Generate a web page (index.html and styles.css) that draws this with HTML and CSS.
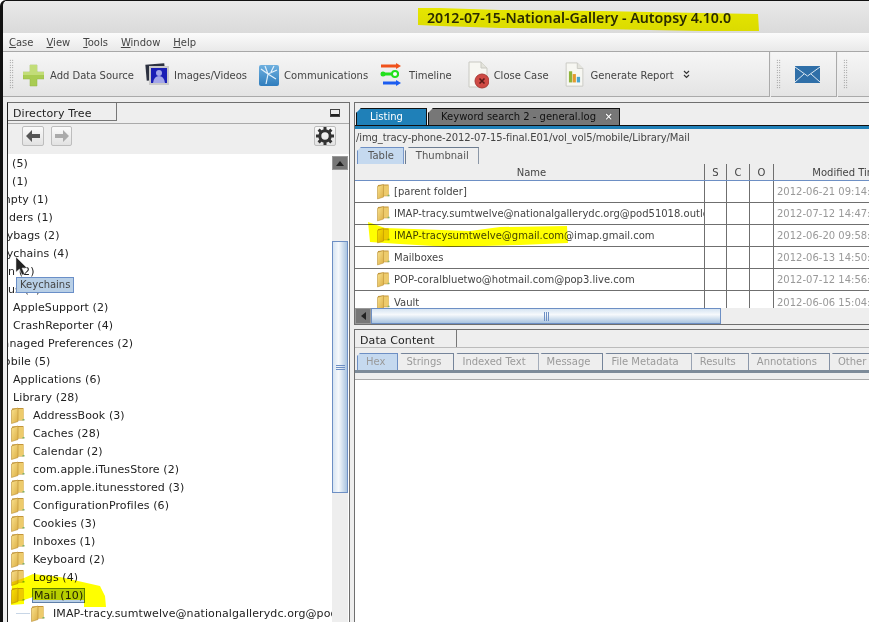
FILE: index.html
```html
<!DOCTYPE html>
<html lang="en">
<head>
<meta charset="UTF-8" />
<title>2012-07-15-National-Gallery - Autopsy 4.10.0</title>
<link rel="stylesheet" href="styles.css">
</head>
<body>
<svg class="defs" width="0" height="0" aria-hidden="true">
  <defs>
    <linearGradient id="folderFill" x1="0" y1="0" x2="1" y2="1">
      <stop offset="0" stop-color="#f9e28e" />
      <stop offset="1" stop-color="#dcae45" />
    </linearGradient>
    <linearGradient id="commFill" x1="0" y1="0" x2="0" y2="1">
      <stop offset="0" stop-color="#6fb0df" />
      <stop offset="1" stop-color="#2f7dbd" />
    </linearGradient>
    <symbol id="folder" viewBox="0 0 14 17">
      <path d="M1 1.5 L6 1 L12.5 1 L12.5 13.5 L6 13.5 L1 15.5 Z" fill="#c3953a" />
      <path d="M6 2 L12.5 2 L12.5 13 L6 13 Z" fill="#edcb6c" />
      <path d="M0.5 3 L7 1 L7 14.5 L0.5 16.5 Z" fill="url(#folderFill)" stroke="#b98f36" stroke-width=".6" />
      <path d="M11.5 12 h2 v1.5 h-2z" fill="#7fb069" />
    </symbol>
    <symbol id="doc" viewBox="0 0 22 28">
      <path d="M2 1 H14 L20 7 V26 H2 Z" fill="#f7f7f2" stroke="#c9c9c2" />
      <path d="M14 1 V7 H20" fill="#e4e4dc" stroke="#c9c9c2" />
    </symbol>
  </defs>
</svg>

<header class="titlebar">
  <span class="title">2012-07-15-National-Gallery - Autopsy 4.10.0</span>
</header>

<nav class="menubar">
  <span><u>C</u>ase</span>
  <span><u>V</u>iew</span>
  <span><u>T</u>ools</span>
  <span><u>W</u>indow</span>
  <span><u>H</u>elp</span>
</nav>

<div class="toolbars">
  <div class="toolbar toolbar-main">
    <i class="grip"></i>
    <button class="tool tool-add">
      <svg width="21" height="23" viewBox="0 0 21 23"><path d="M7 1 H14 V8 H21 V15 H14 V22 H7 V15 H0 V8 H7 Z" fill="#a9cc52" stroke="#93b544" stroke-width=".5" /><path d="M7 1 H14 V8 H7Z M0 8 H21 V11 H0Z" fill="#c2dd78" /></svg>
      Add Data Source
    </button>
    <button class="tool tool-images">
      <svg width="25" height="24" viewBox="0 0 25 24"><rect x="1" y="1" width="19" height="16" fill="#2c3140" transform="rotate(-5 10 9)" /><rect x="4" y="3" width="20" height="19" fill="#c9c9c9" /><rect x="6" y="5" width="16" height="15" fill="#1b1fb5" /><circle cx="14" cy="10" r="3" fill="#a3a6e8" /><path d="M8 20 Q9 13 14 13 Q19 13 20 20Z" fill="#a3a6e8" /></svg>
      Images/Videos
    </button>
    <button class="tool tool-comm">
      <svg width="20" height="21" viewBox="0 0 20 21"><rect x="0" y="0" width="20" height="21" rx="2" fill="url(#commFill)" /><path d="M2 4 L9 9 L7 19 M9 9 L18 5 M9 9 L17 14 M6 1 L9 9 M12 7 L15 1" stroke="#e3f1fb" stroke-width="1.2" fill="none" /></svg>
      Communications
    </button>
    <button class="tool tool-time">
      <svg width="22" height="24" viewBox="0 0 22 24"><path d="M1 3 H17" stroke="#f0521c" stroke-width="3" /><path d="M16 0 L21 3 L16 6Z" fill="#f0521c" /><path d="M1 11 H19" stroke="#22e01c" stroke-width="3" /><circle cx="3" cy="11" r="2.5" fill="#22e01c" /><circle cx="15" cy="11" r="3" fill="#fff" stroke="#22e01c" stroke-width="2" /><path d="M3 20 H17" stroke="#1b5cf0" stroke-width="3" /><path d="M16 17 L21 20 L16 23Z" fill="#1b5cf0" /></svg>
      Timeline
    </button>
    <button class="tool tool-close">
      <svg width="22" height="28" viewBox="0 0 22 28"><use href="#doc" /><circle cx="15" cy="20" r="7" fill="#cf4a44" stroke="#a93a35" /><path d="M12.5 17.5 L17.5 22.5 M17.5 17.5 L12.5 22.5" stroke="#5b1a18" stroke-width="1.6" /></svg>
      Close Case
    </button>
    <button class="tool tool-report">
      <svg width="21" height="26" viewBox="0 0 22 28"><use href="#doc" /><rect x="5" y="10" width="3.5" height="12" fill="#8fb43a" /><rect x="9" y="13" width="3.5" height="9" fill="#e39a2e" /><rect x="13.5" y="16" width="3.5" height="6" fill="#4aa6cf" /></svg>
      Generate Report
    </button>
    <svg class="more" width="7" height="9" viewBox="0 0 7 9"><path d="M1 1 L3.5 3.5 L6 1 M1 5 L3.5 7.5 L6 5" stroke="#333" stroke-width="1.2" fill="none" /></svg>
  </div>
  <div class="toolbar toolbar-mail">
    <i class="grip"></i>
    <svg class="envelope" width="25" height="17" viewBox="0 0 25 17"><rect width="25" height="17" fill="#2f6fa8" /><path d="M0 1 L12.5 10 L25 1 M0 16 L9 8 M25 16 L16 8" stroke="#dbe7f1" stroke-width="1" fill="none" /></svg>
  </div>
  <div class="toolbar toolbar-last">
    <i class="grip"></i>
  </div>
</div>

<main class="workspace">
  <section class="pane tree-pane">
    <div class="pane-head">
      <span class="pane-tab">Directory Tree</span>
      <span class="minimize"></span>
    </div>
    <div class="tree-nav">
      <span class="nav-btn">
        <svg width="14" height="12" viewBox="0 0 14 12"><path d="M6 0 L0 6 L6 12 L6 8 H14 V4 H6 Z" fill="#555" /></svg>
      </span>
      <span class="nav-btn nav-off">
        <svg width="14" height="12" viewBox="0 0 14 12"><path d="M8 0 L14 6 L8 12 L8 8 H0 V4 H8 Z" fill="#aaa" /></svg>
      </span>
      <span class="nav-btn nav-gear">
        <svg width="18" height="18" viewBox="0 0 18 18"><circle cx="9" cy="9" r="5.2" fill="none" stroke="#333" stroke-width="3" /><path d="M9 0 V4 M9 14 V18 M0 9 H4 M14 9 H18 M2.6 2.6 L5.4 5.4 M12.6 12.6 L15.4 15.4 M15.4 2.6 L12.6 5.4 M5.4 12.6 L2.6 15.4" stroke="#333" stroke-width="3" /></svg>
      </span>
    </div>
    <div class="tree-body">
      <ul class="tree">
        <li class="cut">(5)</li>
        <li class="cut">(1)</li>
        <li class="d1">Empty (1)</li>
        <li class="d1">Folders (1)</li>
        <li class="d1">Keybags (2)</li>
        <li class="d1">Keychains (4)</li>
        <li class="d1 stub">n (2)</li>
        <li class="d1 stub">us (1)</li>
        <li class="d2">AppleSupport (2)</li>
        <li class="d2">CrashReporter (4)</li>
        <li class="d1">Managed Preferences (2)</li>
        <li class="d1">mobile (5)</li>
        <li class="d2">Applications (6)</li>
        <li class="d2">Library (28)</li>
        <li class="d3"><svg><use href="#folder" /></svg>AddressBook (3)</li>
        <li class="d3"><svg><use href="#folder" /></svg>Caches (28)</li>
        <li class="d3"><svg><use href="#folder" /></svg>Calendar (2)</li>
        <li class="d3"><svg><use href="#folder" /></svg>com.apple.iTunesStore (2)</li>
        <li class="d3"><svg><use href="#folder" /></svg>com.apple.itunesstored (3)</li>
        <li class="d3"><svg><use href="#folder" /></svg>ConfigurationProfiles (6)</li>
        <li class="d3"><svg><use href="#folder" /></svg>Cookies (3)</li>
        <li class="d3"><svg><use href="#folder" /></svg>Inboxes (1)</li>
        <li class="d3"><svg><use href="#folder" /></svg>Keyboard (2)</li>
        <li class="d3"><svg><use href="#folder" /></svg>Logs (4)</li>
        <li class="d3"><svg><use href="#folder" /></svg><span class="selected">Mail (10)</span></li>
        <li class="d4"><svg><use href="#folder" /></svg>IMAP-tracy.sumtwelve@nationalgallerydc.org@pod51018.outlook.com</li>
      </ul>
      <div class="vscroll">
        <span class="sb-btn"><i class="arrow-up"></i></span>
        <span class="sb-track sb-top"></span>
        <span class="sb-thumb-v"><i class="grip-v"></i></span>
        <span class="sb-track sb-fill"></span>
      </div>
    </div>
  </section>

  <div class="right-col">
    <section class="pane listing-pane">
      <div class="main-tabs">
        <span class="main-tab active">Listing</span>
        <span class="main-tab">Keyword search 2 - general.log <b class="close-x">×</b></span>
      </div>
      <div class="blue-rule"></div>
      <div class="path">/img_tracy-phone-2012-07-15-final.E01/vol_vol5/mobile/Library/Mail</div>
      <div class="sub-tabs">
        <span class="sub-tab on">Table</span>
        <span class="sub-tab">Thumbnail</span>
      </div>
      <div class="grid">
        <div class="row head"><span>Name</span><span>S</span><span>C</span><span>O</span><span>Modified Time</span></div>
        <div class="row"><span><svg><use href="#folder" /></svg>[parent folder]</span><span></span><span></span><span></span><span class="date">2012-06-21 09:14:06</span></div>
        <div class="row"><span><svg><use href="#folder" /></svg>IMAP-tracy.sumtwelve@nationalgallerydc.org@pod51018.outlook.com</span><span></span><span></span><span></span><span class="date">2012-07-12 14:47:06</span></div>
        <div class="row"><span><svg><use href="#folder" /></svg>IMAP-tracysumtwelve@gmail.com@imap.gmail.com</span><span></span><span></span><span></span><span class="date">2012-06-20 09:58:54</span></div>
        <div class="row"><span><svg><use href="#folder" /></svg>Mailboxes</span><span></span><span></span><span></span><span class="date">2012-06-13 14:50:13</span></div>
        <div class="row"><span><svg><use href="#folder" /></svg>POP-coralbluetwo@hotmail.com@pop3.live.com</span><span></span><span></span><span></span><span class="date">2012-07-12 14:56:44</span></div>
        <div class="row row-last"><span><svg><use href="#folder" /></svg>Vault</span><span></span><span></span><span></span><span class="date">2012-06-06 15:04:44</span></div>
      </div>
      <div class="hscroll">
        <span class="sb-btn"><i class="arrow-left"></i></span>
        <span class="sb-thumb-h"><i class="grip-h"></i></span>
        <span class="sb-track"></span>
      </div>
    </section>

    <section class="pane content-pane">
      <div class="pane-head content-head">
        <span class="pane-tab">Data Content</span>
      </div>
      <div class="data-tabs">
        <span class="data-tab on">Hex</span>
        <span class="data-tab">Strings</span>
        <span class="data-tab">Indexed Text</span>
        <span class="data-tab">Message</span>
        <span class="data-tab">File Metadata</span>
        <span class="data-tab">Results</span>
        <span class="data-tab">Annotations</span>
        <span class="data-tab">Other Occurrences</span>
      </div>
      <div class="data-rule"></div>
      <div class="data-band"></div>
      <div class="data-view"></div>
    </section>
  </div>
</main>

<div class="tooltip">Keychains</div>
<svg class="cursor" width="13" height="20" viewBox="0 0 13 20"><path d="M1 0 L1 15 L4.5 12 L7 18 L9.5 17 L7 11 L12 11 Z" fill="#222" stroke="#ddd" stroke-width=".5" /></svg>

<!-- marker strokes drawn over the screenshot -->
<svg class="marker" width="869" height="622" viewBox="0 0 869 622" aria-hidden="true">
  <path d="M418 8 L440 8 L500 10 L600 11 L700 13 L758 14 L759 31 L700 31 L600 29 L500 28 L440 26 L418 25 Z" />
  <path d="M368 222 L385 228 L470 231 L500 227 L567 226 L568 243 L520 245 L450 247 L400 244 L370 242 Z" />
  <path d="M12 582 L24 578 L33 574 L60 577 L78 581 L100 586 L105 596 L106 607 L84 607 L84 600 L33 600 L33 597 L24 600 L24 604 L11 605 Z" />
</svg>
</body>
</html>
```

FILE: styles.css
```css
:root {
  --line: #6f6f6f;
  --panel: #eeeeee;
  --blue-line: #6d8fc4;
  --text: #2a2a2a;
  --font: "DejaVu Sans", sans-serif;
}
* {
  box-sizing: border-box;
}
html,
body {
  margin: 0;
  height: 622px;
  overflow: hidden;
}
html {
  background: #fff;
}
body {
  position: relative;
  width: 869px;
  background: var(--panel);
  border-left: 3px solid #111;
  border-top: 1px solid #111;
  border-top-left-radius: 6px;
  font-family: var(--font);
  font-size: 10px;
  color: var(--text);
}
.defs {
  position: absolute;
}
.titlebar {
  height: 32px;
  background: linear-gradient(#e9e9e9, #dadada);
  border-top-left-radius: 5px;
  display: flex;
  justify-content: flex-end;
  align-items: center;
  padding-right: 138px;
}
.title {
  font-family: "Noto Sans", sans-serif;
  font-size: 14.2px;
  font-weight: 600;
  color: #2b2b10;
}
.menubar {
  height: 19px;
  background: linear-gradient(#fbfbfb, #e9e9e9);
  border-bottom: 1px solid #a8a8a8;
  display: flex;
  align-items: center;
  gap: 13px;
  padding-left: 6px;
  color: #444;
}
.toolbars {
  height: 45px;
  display: flex;
  gap: 1px;
}
.toolbar {
  background: linear-gradient(#f6f6f6, #e4e4e4);
  border-right: 1px solid #aaa;
  border-bottom: 1px solid #aaa;
  display: flex;
  align-items: center;
}
.toolbar-main {
  width: 767px;
  padding-left: 6px;
}
.toolbar-mail {
  width: 66px;
  padding-left: 5px;
}
.toolbar-last {
  flex: 1;
  padding-left: 5px;
  border-right: 0;
}
.grip {
  width: 5px;
  height: 30px;
  background: radial-gradient(circle, #777 0.6px, transparent 0.8px) 0 0 / 2.5px 2.5px;
}
.tool {
  display: flex;
  align-items: center;
  gap: 6px;
  border: 0;
  padding: 2px 0 0;
  margin-left: 12px;
  background: none;
  font: inherit;
  color: #444;
}
.toolbar-main .grip + .tool {
  margin-left: 9px;
}
.tool-images {
  gap: 4px;
  margin-left: 11px;
}
.tool-comm {
  gap: 5px;
}
.tool-time {
  gap: 7px;
}
.tool-close {
  gap: 5px;
  margin-left: 15px;
}
.tool-report {
  margin-left: 15px;
}
.more {
  margin-left: 9px;
}
.envelope {
  margin-left: 14px;
}
.workspace {
  display: flex;
  gap: 4px;
  padding: 5px 0 0 4px;
  height: 525px;
}
.pane {
  border: 1px solid var(--line);
  background: var(--panel);
}
.tree-pane {
  width: 343px;
  display: flex;
  flex-direction: column;
  border-left-color: #222;
  border-bottom: 0;
  overflow: hidden;
}
.pane-head {
  height: 21px;
  flex: none;
  display: flex;
  justify-content: space-between;
  border-bottom: 1px solid #aaa;
  font-size: 11px;
  letter-spacing: 0.1px;
}
.pane-tab {
  width: 109px;
  height: 18px;
  display: flex;
  align-items: center;
  padding: 3px 0 0 5px;
  border-right: 1px solid #777;
  border-bottom: 1px solid #777;
  color: #222;
}
.minimize {
  width: 10px;
  height: 8px;
  margin: 6px 9px 0 0;
  border: 1px solid #444;
  background: linear-gradient(transparent 4px, #222 4px);
}
.tree-nav {
  height: 30px;
  flex: none;
  display: flex;
  gap: 7px;
  padding: 2px 0 0 14px;
}
.nav-btn {
  width: 22px;
  height: 20px;
  display: flex;
  align-items: center;
  justify-content: center;
  border: 1px solid #bdbdbd;
  border-radius: 2px;
  background: linear-gradient(#fafafa, #e2e2e2);
}
.nav-off {
  width: 21px;
}
.nav-gear {
  margin-left: auto;
  margin-right: 13px;
}
.tree-body {
  flex: 1;
  min-height: 0;
  display: flex;
  background: #fff;
}
.tree {
  flex: 1;
  min-width: 0;
  margin: 0;
  padding: 0;
  list-style: none;
  overflow: hidden;
  color: #222;
  font-size: 11px;
  letter-spacing: 0.1px;
}
.tree li {
  height: 18px;
  display: flex;
  align-items: center;
  white-space: nowrap;
}
.tree svg {
  width: 14px;
  height: 17px;
  flex: none;
  margin-right: 8px;
}
.cut {
  padding-left: 4px;
}
.d1 {
  margin-left: -15px;
}
.stub {
  margin-left: 0;
}
.d2 {
  padding-left: 5px;
}
.d3 {
  padding-left: 3px;
}
.d4 {
  padding-left: 23px;
  background: linear-gradient(#c8d6e6, #c8d6e6) 8px 9px / 14px 1px no-repeat;
}
.selected {
  background: #b8cfe6;
  border: 1px solid #5f7fa8;
  padding: 0 1px;
  margin-left: -1px;
}
.vscroll {
  width: 16px;
  flex: none;
  margin-right: 1px;
  padding-top: 2px;
  display: flex;
  flex-direction: column;
}
.sb-btn {
  flex: none;
  width: 16px;
  height: 14px;
  display: flex;
  align-items: center;
  justify-content: center;
  background: #777;
  border: 1px solid #999;
}
.arrow-up {
  border: 4px solid transparent;
  border-top: 0;
  border-bottom: 5px solid #222;
}
.arrow-left {
  border: 4px solid transparent;
  border-left: 0;
  border-right: 5px solid #222;
}
.sb-track {
  flex: 1;
  background: var(--panel);
}
.sb-top {
  flex: none;
  height: 71px;
}
.sb-thumb-v {
  flex: none;
  height: 252px;
  display: flex;
  align-items: center;
  justify-content: center;
  border: 1px solid var(--blue-line);
  background: linear-gradient(90deg, #d6e4f2, #f6f9fc 40%, #a9c4e0);
}
.grip-v {
  width: 9px;
  height: 5px;
  border-top: 1px solid #6d8fc4;
  border-bottom: 1px solid #6d8fc4;
  background: linear-gradient(#6d8fc4, #6d8fc4) 0 1px / 100% 1px no-repeat;
}
.right-col {
  flex: 1;
  min-width: 0;
  display: flex;
  flex-direction: column;
  gap: 4px;
}
.listing-pane {
  height: 223px;
  flex: none;
  border-right: 0;
  display: flex;
  flex-direction: column;
  overflow: hidden;
}
.main-tabs {
  height: 22px;
  flex: none;
  display: flex;
  align-items: flex-end;
  padding-left: 1px;
  gap: 1px;
  white-space: nowrap;
}
.main-tab {
  height: 17px;
  display: flex;
  align-items: center;
  width: 192px;
  padding: 0 0 1px 12px;
  background: #777;
  color: #111;
  border: 1px solid #111;
  border-bottom: 0;
  clip-path: polygon(5px 0, 100% 0, 100% 100%, 0 100%, 0 5px);
}
.main-tab.active {
  width: 71px;
  padding-left: 13px;
  background: #1f80b8;
  color: #fff;
}
.close-x {
  margin-left: auto;
  margin-right: 6px;
  font-weight: 700;
  color: #fff;
  text-shadow: 0 0 1px #000;
}
.blue-rule {
  height: 5px;
  flex: none;
  background: #1f80b8;
  border-top: 1px solid #111;
  border-bottom: 1px solid #eee;
}
.path {
  height: 15px;
  flex: none;
  margin-left: 1px;
  line-height: 16px;
  letter-spacing: -0.1px;
  color: #444;
  white-space: nowrap;
}
.sub-tabs {
  height: 19px;
  flex: none;
  display: flex;
  align-items: flex-end;
  padding-left: 2px;
  gap: 1px;
}
.sub-tab {
  height: 17px;
  padding: 0 9px 0 10px;
  line-height: 15px;
  border: 1px solid #6c7c90;
  border-bottom: 0;
  color: #555;
  clip-path: polygon(4px 0, 100% 0, 100% 100%, 0 100%, 0 4px);
}
.sub-tab.on {
  background: #c5d9ef;
  border-color: var(--blue-line);
}
.grid {
  height: 144px;
  flex: none;
  background: #fff;
  overflow: hidden;
  white-space: nowrap;
}
.row {
  width: 570px;
  height: 22px;
  display: grid;
  grid-template-columns: 350px 22px 23px 24px 147px;
  background: linear-gradient(var(--line), var(--line)) 0 100% / 100% 1px no-repeat;
  padding-bottom: 1px;
}
.row > span {
  display: flex;
  align-items: center;
  overflow: hidden;
  border-right: 1px solid var(--line);
  color: #444;
}
.row > span:first-child {
  padding-left: 22px;
}
.row > span:last-child {
  border-right: 0;
  padding-left: 3px;
}
.row svg {
  width: 13px;
  height: 17px;
  flex: none;
  margin-right: 4px;
}
.row .date {
  color: #999;
}
.row.head {
  height: 17px;
  background: #eee linear-gradient(var(--blue-line), var(--blue-line)) 0 100% / 100% 1px no-repeat;
}
.row.head > span {
  justify-content: center;
  padding: 0;
}
.row.head > span:first-child {
  padding-left: 4px;
}
.row-last {
  background: none;
  padding-bottom: 0;
}
.hscroll {
  height: 16px;
  flex: none;
  display: flex;
}
.hscroll .sb-btn {
  height: 16px;
}
.sb-thumb-h {
  width: 350px;
  flex: none;
  display: flex;
  align-items: center;
  justify-content: center;
  border: 1px solid var(--blue-line);
  background: linear-gradient(#d6e4f2, #f6f9fc 40%, #a9c4e0);
}
.grip-h {
  width: 5px;
  height: 9px;
  border-left: 1px solid #6d8fc4;
  border-right: 1px solid #6d8fc4;
  background: linear-gradient(#6d8fc4, #6d8fc4) 1px 0 / 1px 100% no-repeat;
}
.content-pane {
  flex: 1;
  border-right: 0;
  border-bottom: 0;
  display: flex;
  flex-direction: column;
  overflow: hidden;
}
.content-head {
  height: 18px;
  justify-content: flex-start;
  border-bottom: 1px solid #bbb;
}
.content-head .pane-tab {
  width: 102px;
  height: 17px;
  padding-top: 3px;
  border-bottom: 0;
}
.data-tabs {
  height: 22px;
  flex: none;
  display: flex;
  align-items: flex-end;
  padding-left: 2px;
  white-space: nowrap;
}
.data-tab {
  height: 17px;
  line-height: 15px;
  padding: 0 12px 0 8px;
  border: 1px solid #75849a;
  border-bottom: 0;
  border-left-width: 0;
  color: #9a9a9a;
  clip-path: polygon(3px 0, 100% 0, 100% 100%, 0 100%, 0 3px);
}
.data-tab.on {
  background: #c5d9ef;
  border-left-width: 1px;
  border-color: var(--blue-line);
}
.data-rule {
  height: 3px;
  flex: none;
  background: #7d8b99;
}
.data-band {
  height: 7px;
  flex: none;
  border-bottom: 1px solid #aaa;
}
.data-view {
  flex: 1;
  background: #fff;
}
.tooltip {
  position: absolute;
  left: 13px;
  top: 276px;
  padding: 0 3px;
  height: 16px;
  line-height: 14px;
  background: #b8cfe6;
  border: 1px solid #6a8fc8;
  color: #444;
}
.cursor {
  position: absolute;
  left: 12px;
  top: 256px;
}
.marker {
  position: absolute;
  left: -3px;
  top: -1px;
  mix-blend-mode: multiply;
  fill: #ffff00;
  pointer-events: none;
}
```
